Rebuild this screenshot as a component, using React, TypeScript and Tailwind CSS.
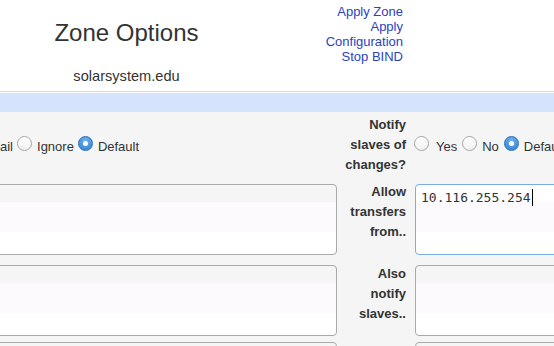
import React from 'react';

const stripes =
  'bg-[linear-gradient(to_bottom,#f5f5f5_17px,#fdfafd_17px,#fdfafd_47px,#ffffff_47px)]';

function Radio({ checked }: { checked?: boolean }) {
  if (checked) {
    return (
      <span className="mb-[3px] flex h-[15px] w-[15px] shrink-0 items-center justify-center rounded-full border border-[#2c6db5] bg-[radial-gradient(circle_at_50%_30%,#6fb3ee,#2f7ed0)]">
        <span className="h-[5px] w-[5px] rounded-full bg-white" />
      </span>
    );
  }
  return (
    <span className="mb-[3px] block h-[15px] w-[15px] shrink-0 rounded-full border border-[#a6a6a6] bg-[linear-gradient(to_bottom,#ffffff,#f0f0f0)]" />
  );
}

function Field({ className = '', children }: { className?: string; children?: React.ReactNode }) {
  return (
    <div className={`h-[71px] rounded-[4px] border border-[#a9a9a9] ${stripes} ${className}`}>
      {children}
    </div>
  );
}

function Label({ lines }: { lines: string[] }) {
  return (
    <div className="w-[70px] shrink-0 pr-[1px] text-right text-[13px] font-bold leading-[20px] text-[#333]">
      {lines.map((l) => (
        <div key={l}>{l}</div>
      ))}
    </div>
  );
}

export default function App() {
  return (
    <div className="h-[346px] w-[554px] overflow-hidden bg-white font-['Liberation_Sans',Arial,sans-serif] text-[#333]">
      {/* header */}
      <div className="flex h-[91px]">
        <div className="flex w-[253px] flex-col items-center">
          <h1 className="pt-[19px] text-[24px] leading-[28px]">Zone Options</h1>
          <div className="mt-[21px] text-[14.6px] leading-[16px]">solarsystem.edu</div>
        </div>
        <div className="w-[150px] pt-[4px] text-right text-[13px] leading-[15px] text-[#2a42c2]">
          <div>Apply Zone</div>
          <div>Apply</div>
          <div>Configuration</div>
          <div>Stop BIND</div>
        </div>
      </div>
      <div className="h-px bg-[#d9d9d9]" />
      <div className="h-px bg-white" />
      <div className="h-[19px] bg-[#d5e3fc]" />

      {/* form */}
      <div className="h-[300px] bg-[#f5f5f5] text-[13px]">
        <div className="flex pt-[3px]">
          <div className="flex h-[60px] w-[337px] shrink-0 items-center">
            <span className="mt-[4px]">ail</span>
            <span className="ml-[4px]"><Radio /></span>
            <span className="ml-[5px] mt-[4px]">Ignore</span>
            <span className="ml-[4px]"><Radio checked /></span>
            <span className="ml-[5px] mt-[4px]">Default</span>
          </div>
          <Label lines={['Notify', 'slaves of', 'changes?']} />
          <div className="ml-[7px] flex h-[60px] items-center whitespace-nowrap">
            <Radio />
            <span className="ml-[7px] mt-[4px]">Yes</span>
            <span className="ml-[5px]"><Radio /></span>
            <span className="ml-[5px] mt-[4px]">No</span>
            <span className="ml-[5px]"><Radio checked /></span>
            <span className="ml-[5px] mt-[4px]">Default</span>
          </div>
        </div>

        <div className="flex pt-[7px]">
          <div className="w-[337px] shrink-0 pt-[2px]">
            <Field className="-ml-[10px] w-[347px]" />
          </div>
          <Label lines={['Allow', 'transfers', 'from..']} />
          <div className="ml-[8px] pt-[2px]">
            <div className="h-[71px] w-[200px] rounded-[4px] border border-[#78ade6] bg-[linear-gradient(to_bottom,#ffffff_17px,#fdfafd_17px,#fdfafd_47px,#ffffff_47px)] pl-[5px] pt-[4px] font-['DejaVu_Sans_Mono',monospace] text-[13px] leading-[15px] text-[#333]">
              10.116.255.254
              <span className="ml-px inline-block h-[17px] w-px bg-black align-[-4px]" />
            </div>
          </div>
        </div>

        <div className="flex pt-[9px]">
          <div className="w-[337px] shrink-0 pt-[1px]">
            <Field className="-ml-[10px] w-[347px]" />
          </div>
          <Label lines={['Also', 'notify', 'slaves..']} />
          <div className="ml-[8px] pt-[1px]">
            <Field className="w-[200px]" />
          </div>
        </div>

        <div className="flex pt-[6px]">
          <div className="w-[337px] shrink-0">
            <Field className="-ml-[10px] w-[347px]" />
          </div>
          <div className="w-[70px] shrink-0" />
          <div className="ml-[8px]">
            <Field className="w-[200px]" />
          </div>
        </div>
      </div>
    </div>
  );
}
